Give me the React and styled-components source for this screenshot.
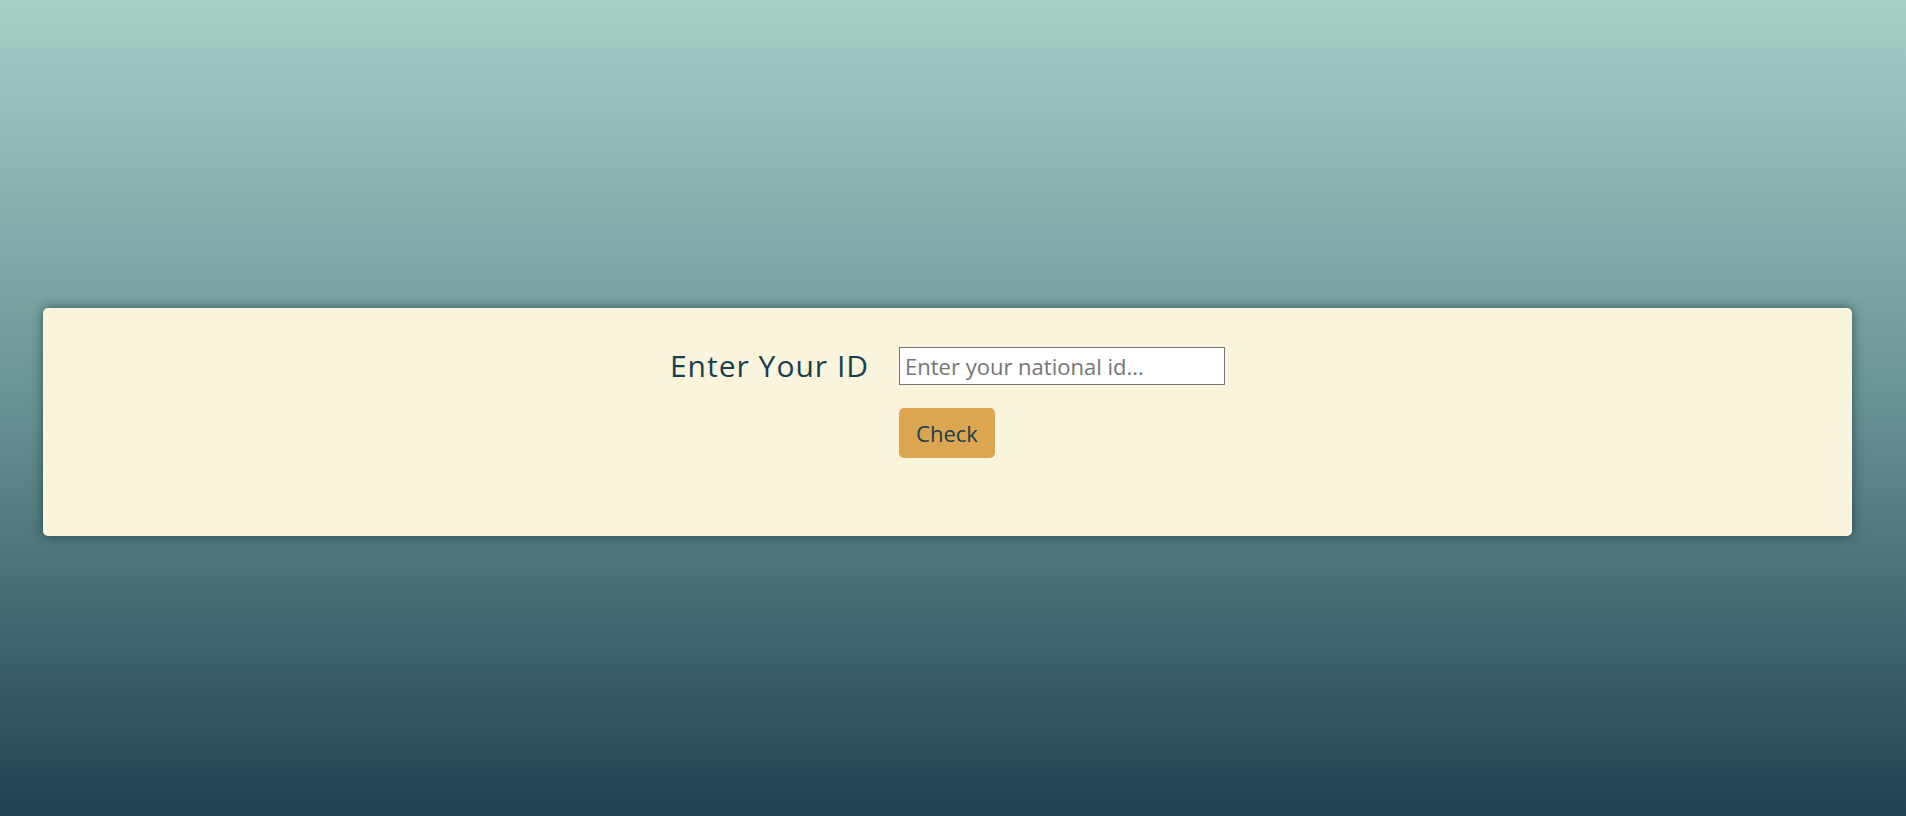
import React from 'react';
import styled, { createGlobalStyle } from 'styled-components';

const GlobalStyle = createGlobalStyle`
  html, body {
    margin: 0;
    padding: 0;
  }
  body {
    font-family: 'Comic Sans MS', 'Open Sans', sans-serif;
  }
`

// fond en degrade
const Page = styled.div`
  min-height: 100vh;
  box-sizing: border-box;
  padding-top: 308px;
  background: linear-gradient(180deg, #a6cfc7 0%, #6a9595 48%, #1f4150 100%);
`

const Card = styled.div`
  margin: 0 54px 0 43px;
  height: 228px;
  box-sizing: border-box;
  padding-top: 39px;
  background-color: #fbf4dc;
  border-radius: 5px;
  box-shadow: 0 0 12px rgba(10, 40, 48, 0.6);
`

const Form = styled.form`
  display: grid;
  grid-template-columns: auto 326px;
  justify-content: center;
  align-items: center;
  column-gap: 30px;
  row-gap: 23px;
`

const Label = styled.label`
  font-family: 'Comic Sans MS', 'Open Sans', sans-serif;
  font-size: 30px;
  letter-spacing: 1px;
  color: #173f4f;
  line-height: 38px;
`

const IdInput = styled.input`
  box-sizing: border-box;
  width: 326px;
  height: 38px;
  border: 1px solid #767676;
  padding: 0 5px;
  font-family: 'Comic Sans MS', 'Open Sans', sans-serif;
  font-size: 22px;
  color: #173f4f;
  background: #ffffff;
  outline: none;

  &::placeholder {
    color: #757575;
  }
`

const CheckBtn = styled.button`
  grid-column: 2;
  justify-self: start;
  height: 50px;
  padding: 0 17px;
  border: none;
  border-radius: 5px;
  background-color: #dca651;
  color: #173f4f;
  font-family: 'Comic Sans MS', 'Open Sans', sans-serif;
  font-size: 22px;
  cursor: pointer;
`

class App extends React.Component {
  state = {
    nationalId: ''
  }

  onChangeId = (event) => {
    this.setState({ nationalId: event.target.value })
  }

  onCheck = (event) => {
    event.preventDefault()
  }

  render() {
    return (
      <Page>
        <GlobalStyle />
        <Card>
          <Form onSubmit={this.onCheck}>
            <Label htmlFor="nid">Enter Your ID</Label>
            <IdInput
              id="nid"
              value={this.state.nationalId}
              onChange={this.onChangeId}
              placeholder={'Enter your national id...'}
            />
            <CheckBtn type="submit">Check</CheckBtn>
          </Form>
        </Card>
      </Page>
    );
  }
}

export default App;
